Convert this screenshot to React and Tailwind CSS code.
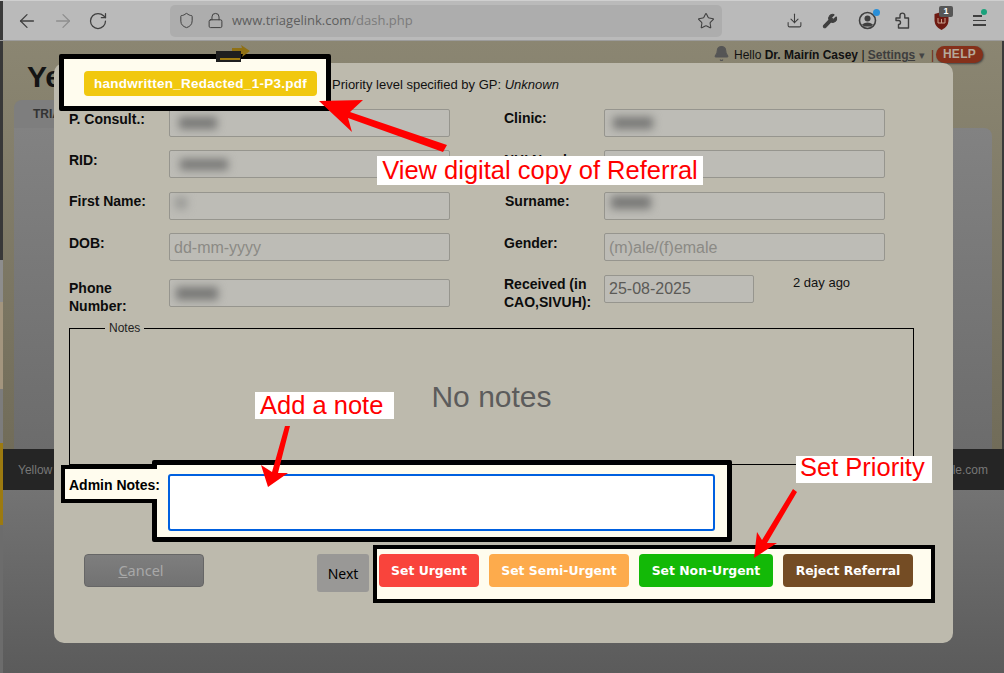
import React from "react";
import { ArrowLeft, ArrowRight, RotateCw, Shield, Lock, Star, Download, Wrench, Bell } from "lucide-react";

const sans = "font-['Liberation_Sans',Arial,sans-serif]";

function Blur({ w = 36, h = 11, x = 6, y = 0, color = "bg-[#787876]" }) {
  return <span className={`block blur-[4px] ${color}`} style={{ width: w, height: h, marginLeft: x, marginTop: y }} />;
}

function Box({ children, w = "w-[281px]" }) {
  return (
    <div className={`${w} h-[28px] shrink-0 flex items-center overflow-hidden rounded-[2px] border border-[#96958e] bg-[#bdbcb6] text-[16px] text-[#8b8a85] px-[4px]`}>
      {children}
    </div>
  );
}

function Label({ children, className = "" }) {
  return <div className={`w-[100px] shrink-0 pt-[1px] text-[14px] leading-[18px] font-bold text-[#0c0c0c] ${className}`}>{children}</div>;
}

function Row({ className = "", children }) {
  return <div className={`flex ${className}`}>{children}</div>;
}

function ToolBar() {
  const ic = "text-[#3f3f3f]";
  return (
    <div className="h-[41px] shrink-0 flex items-center bg-[#bababa] border-t border-[#cfcfcf] border-b border-b-[#9c9c9c]">
      <div className="w-[3px] h-full bg-[#3a3a3a]" />
      <div className="w-[167px] flex items-center pl-[13px] gap-[14px]">
        <ArrowLeft size={22} strokeWidth={1.4} className={ic} />
        <ArrowRight size={22} strokeWidth={1.4} className="text-[#8e8e8e]" />
        <RotateCw size={20} strokeWidth={1.5} className={ic} />
      </div>
      <div className="w-[552px] h-[32px] flex items-center rounded-[5px] bg-[#adadad] pl-[8px] pr-[7px]">
        <Shield size={17} strokeWidth={1.4} className={ic} />
        <Lock size={17} strokeWidth={1.4} className={`${ic} ml-[12px]`} />
        <span className="ml-[8px] text-[13px] text-[#5e5e5e] font-['Open_Sans',sans-serif]">www.triagelink.com<span className="text-[#7b7b7b]">/dash.php</span></span>
        <Star size={18} strokeWidth={1.4} className={`${ic} ml-auto`} />
      </div>
      <div className="flex-1 flex items-center pl-[64px]">
        <Download size={17} strokeWidth={1.5} className={ic} />
        <Wrench size={16} strokeWidth={1.6} fill="#3f3f3f" className={`${ic} ml-[19px]`} />
        <div className="relative ml-[20px]">
          <svg width="19" height="19" viewBox="0 0 19 19" fill="none">
            <circle cx="9.5" cy="9.5" r="8" stroke="#3f3f3f" strokeWidth="1.6" />
            <circle cx="9.5" cy="7.5" r="3" fill="#3f3f3f" />
            <path d="M4 13.5 Q9.5 9.5 15 13.5 L13 15.5 H6 Z" fill="#3f3f3f" />
          </svg>
          <span className="absolute -top-[2px] -right-[3px] w-[7px] h-[7px] rounded-full bg-[#2a8fd8]" />
        </div>
        <svg className="ml-[18px]" width="15" height="17" viewBox="0 0 15 17" fill="none">
          <path d="M1 6 H5 V3.5 A2.4 2.4 0 0 1 9.8 3.5 V6 H13.5 V16 H3.5 V12.5 A2 2 0 0 0 3.5 8.5 H1 Z" stroke="#3f3f3f" strokeWidth="1.4" strokeLinejoin="round" />
        </svg>
        <div className="relative ml-[24px]">
          <svg width="15" height="18" viewBox="0 0 15 18"><path d="M0.5 2 L7.5 0 L14.5 2 L14.5 9 Q14 15 7.5 18 Q1 15 0.5 9 Z" fill="#6e1a12" /><path d="M4 6 V11 H11 V6 M7.5 7 V11" stroke="#c9a08c" strokeWidth="1" fill="none" /></svg>
          <span className="absolute -top-[6px] left-[5px] w-[14px] h-[11px] rounded-[2px] bg-[#565656] text-white text-[9px] leading-[11px] font-bold text-center font-['Liberation_Sans',sans-serif]">1</span>
        </div>
        <div className="relative ml-[24px] w-[13px] flex flex-col gap-[3px]">
          <span className="block h-[1.5px] w-[9px] bg-[#3f3f3f]" />
          <span className="block h-[1.5px] bg-[#3f3f3f]" />
          <span className="block h-[1.5px] bg-[#3f3f3f]" />
          <span className="absolute -top-[6px] left-[8px] w-[6px] h-[6px] rounded-full bg-[#1aa27c]" />
        </div>
      </div>
    </div>
  );
}

function Backdrop() {
  return (
    <div className={`flex-1 flex ${sans}`}>
      <div className="w-[3px] shrink-0 flex flex-col">
        <div className="h-[219px] bg-[#383838]" />
        <div className="h-[42px] bg-[#8d8d8d]" />
        <div className="h-[87px] bg-[#a3957e]" />
        <div className="h-[54px] bg-[#7c7c7c]" />
        <div className="h-[82px] bg-[#9c7a10]" />
        <div className="flex-1 bg-[#6c6c6c]" />
      </div>
      <div className="flex-1 min-w-0 flex flex-col">
        <div className="h-[408px] flex flex-col bg-gradient-to-b from-[#8b8672] to-[#716c59] border-r-[2px] border-[#3a3a3a]">
          <div className="h-[59px] relative flex justify-between">
            <div className="pl-[24px] pt-[18px] text-[30px] leading-[36px] font-bold text-[#141414]">Yellow</div>
            <div className="flex items-start pt-[4px] pr-[19px] text-[12px] text-[#111]">
              <Bell size={17} fill="#555" strokeWidth={1.5} className="text-[#555] mr-[4px]" />
              <span className="leading-[20px]">Hello <b className="font-semibold">Dr. Mairín Casey</b> | <span className="underline font-bold text-[#3e3e3e]">Settings</span> <span className="inline-block w-[9px] text-[#444] text-[11px]">▾</span> <span className="text-[#6b2a10]">|</span></span>
              <span className="ml-[2px] mt-[1px] h-[17px] w-[47px] rounded-full bg-[#85301a] text-center text-[12px] leading-[17px] font-bold tracking-[0.3px] text-[#b5a99a] shadow-[1px_1px_2px_#444]">HELP</span>
            </div>
          </div>
          <div className="ml-[11px] w-[120px] h-[28px] shrink-0 rounded-t-[8px] bg-[#7e7e7e] pl-[19px] pt-[5px] text-[12px] font-bold text-[#333]">TRIAGE</div>
          <div className="ml-[11px] mr-[10px] flex-1 rounded-tr-[8px] bg-gradient-to-b from-[#828282] to-[#6c6c6c]" />
        </div>
        <div className="h-[41px] shrink-0 flex items-center justify-between bg-[#252525] pl-[15px] pr-[16px] text-[12px] text-[#777]">
          <span>Yellow Schedule</span>
          <span>support@yellowschedule.com</span>
        </div>
        <div className="flex-1 bg-gradient-to-b from-[#737373] to-[#5b5b5b]" />
      </div>
    </div>
  );
}

function Modal() {
  const urgent = "h-[33px] pt-[1px] rounded-[4px] text-white text-[12.4px] font-bold font-['DejaVu_Sans',sans-serif] shrink-0";
  return (
    <div className={`absolute left-[54px] top-[63px] w-[899px] h-[580px] rounded-[10px] bg-[#bdbaad] ${sans}`}>
      <div className="h-[46px] pl-[278px] pt-[14px] text-[13px] leading-[16px] text-[#111]">
        Priority level specified by GP: <i>Unknown</i>
      </div>
      <div className="pl-[15px]">
        <Row>
          <Row className="w-[435px]"><Label>P. Consult.:</Label><Box><Blur w={38} h={12} x={5} /></Box></Row>
          <Row><Label className="-mt-[1px]">Clinic:</Label><Box><Blur w={40} h={12} x={4} /></Box></Row>
        </Row>
        <Row className="mt-[13px]">
          <Row className="w-[435px]"><Label>RID:</Label><Box><Blur w={48} h={11} x={6} /></Box></Row>
          <Row><Label>NHI Number:</Label><Box /></Row>
        </Row>
        <Row className="mt-[14px]">
          <Row className="w-[435px]"><Label className="-mt-[1px]">First Name:</Label><Box><Blur w={12} h={12} x={1} y={-6} color="bg-[#9a9a97]" /></Box></Row>
          <Row><Label className="-mt-[1px] pl-[1px]">Surname:</Label><Box><Blur w={40} h={13} x={2} y={-8} /></Box></Row>
        </Row>
        <Row className="mt-[13px]">
          <Row className="w-[435px]"><Label>DOB:</Label><Box><span className="pt-[1px]">dd-mm-yyyy</span></Box></Row>
          <Row><Label>Gender:</Label><Box><span className="pt-[1px]">(m)ale/(f)emale</span></Box></Row>
        </Row>
        <Row className="mt-[14px] h-[32px]">
          <Row className="w-[435px]"><Label className="mt-[3px]">Phone Number:</Label><div className="mt-[4px]"><Box><Blur w={42} h={13} x={2} /></Box></div></Row>
          <Row>
            <Label className="-mt-[1px]">Received (in CAO,SIVUH):</Label>
            <Box w="w-[150px]"><span className="text-[#5b5a57]">25-08-2025</span></Box>
            <div className="ml-[39px] pt-[1px] text-[13px] leading-[14px] text-[#111]">2 day ago</div>
          </Row>
        </Row>
        <fieldset className="mt-[14px] w-[845px] h-[144px] border border-black">
          <legend className="ml-[35px] px-[4px] text-[12px] leading-[14px] text-[#222]">Notes</legend>
          <div className="h-[128px] flex items-center justify-center text-[30px] text-[#5c5c5c] pb-[6px]">No notes</div>
        </fieldset>
      </div>
      <div className="relative z-10 -mt-[5px] ml-[7px] flex items-start">
        <div className="relative z-10 mt-[5px] w-[96px] h-[38px] border-l-[4px] border-y-[4px] border-black bg-[#fffcee] pl-[4px] pt-[7px] text-[14px] leading-[18px] font-bold text-black whitespace-nowrap">Admin Notes:</div>
        <div className="-ml-[5px] w-[580px] h-[82px] border-[5px] border-black rounded-[2px] bg-[#fffcee] pl-[11px] pt-[9px]">
          <textarea className="block w-[547px] h-[57px] resize-none bg-white border-[2px] border-[#0060df] rounded-[3px] outline-none" />
        </div>
      </div>
      <div className="flex items-start pl-[30px] mt-[3px]">
        <button className="mt-[9px] w-[120px] h-[33px] rounded-[4px] border border-[#666] bg-gradient-to-b from-[#7e7e7e] to-[#727272] text-[14.5px] pr-[6px] text-[#a8a8a8] font-['Noto_Sans',sans-serif]"><u>C</u>ancel</button>
        <button className="mt-[9px] ml-[113px] w-[52px] h-[38px] rounded-[3px] bg-[#999896] text-[14px] pt-[1px] text-black font-['Noto_Sans',sans-serif]">Next</button>
        <div className="ml-[4px] w-[562px] h-[58px] border-[4px] border-black bg-[#fffcee] pt-[5px] pl-[2px] flex gap-[10px]">
          <button className={`${urgent} w-[100px] bg-[#f9443c]`}>Set Urgent</button>
          <button className={`${urgent} w-[140px] bg-[#fdab4c]`}>Set Semi-Urgent</button>
          <button className={`${urgent} w-[134px] bg-[#13b907]`}>Set Non-Urgent</button>
          <button className={`${urgent} w-[130px] bg-[#744c24]`}>Reject Referral</button>
        </div>
      </div>
    </div>
  );
}

function Annotations() {
  return (
    <div className={sans}>
      <div className="absolute left-[59px] top-[54px] z-20 w-[272px] h-[57px] border-[5px] border-black rounded-[2px] bg-[#fffcee] pl-[20px] pt-[12px]">
        <div className="w-[233px] h-[25px] rounded-[4px] bg-[#f1c80f] text-center text-[13.5px] leading-[26px] font-bold tracking-[0.25px] text-white">handwritten_Redacted_1-P3.pdf</div>
      </div>
      <div className="absolute left-[377px] top-[156px] z-20 w-[326px] h-[29px] bg-white text-center text-[25.5px] leading-[29px] text-[#f00] whitespace-nowrap">View digital copy of Referral</div>
      <div className="absolute left-[255px] top-[392px] z-20 w-[139px] h-[27px] bg-white pl-[5px] text-[25.5px] leading-[27px] text-[#f00] whitespace-nowrap">Add a note</div>
      <div className="absolute left-[796px] top-[456px] z-20 w-[136px] h-[27px] bg-white pl-[4px] text-[25.5px] leading-[23px] text-[#f00] whitespace-nowrap">Set Priority</div>
      <svg className="absolute left-0 top-0 z-30 pointer-events-none" width="1004" height="673" viewBox="0 0 1004 673">
        <path d="M232 48 H242 L241 45 L250 51 L242 57 L243 54 H232 Z" fill="#8f7014" />
        <rect x="216" y="51" width="25" height="11" fill="#1f1f1f" />
        <rect x="220" y="58" width="20" height="2" fill="#a07c10" />
        <polygon points="319,101 363,100 350,112 447,145 443,152 348,118 352,132" fill="#f00" />
        <polygon points="285,426 290,426 278,473 288,473 268,487 261,465 272,472" fill="#f00" />
        <polygon points="793,489 797,492 767,543 777,543 754,558 757,532 762,540" fill="#f00" />
      </svg>
    </div>
  );
}

export default function App() {
  return (
    <div className="relative w-[1004px] h-[673px] overflow-hidden flex flex-col">
      <ToolBar />
      <Backdrop />
      <Modal />
      <Annotations />
    </div>
  );
}
